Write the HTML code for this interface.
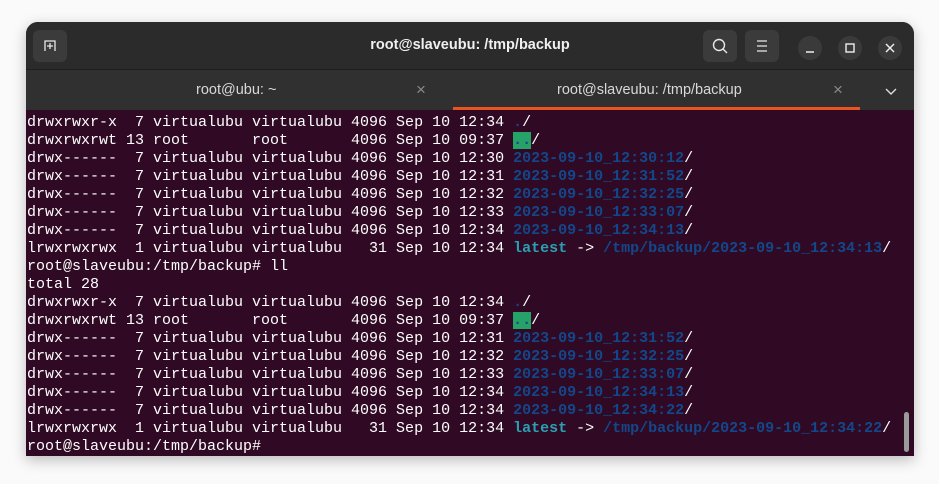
<!DOCTYPE html>
<html><head><meta charset="utf-8"><style>
*{margin:0;padding:0;box-sizing:border-box}
body{width:939px;height:484px;background:#fafafa;position:relative;overflow:hidden;font-family:"Liberation Sans",sans-serif}
.win{position:absolute;left:26px;top:22px;width:888px;height:434px;border-radius:12px 12px 0 0;overflow:hidden;background:#300a24;box-shadow:0 4px 14px rgba(0,0,0,.25)}
.hdr{position:absolute;left:0;top:0;width:888px;height:48px;background:#2b2b2b;border-bottom:1px solid #1e1e1e}
.btn{position:absolute;top:8px;width:34px;height:32px;border-radius:6px;background:#3b3b3b}
.circ{position:absolute;top:14px;width:24px;height:24px;border-radius:50%;background:#3a3a3a}
.title{position:absolute;left:0;right:0;top:15px;text-align:center;color:#f0f0f0;font-weight:bold;font-size:14.5px}
.tabs{position:absolute;left:0;top:48px;width:888px;height:40px;background:#303030}
.tab{position:absolute;top:12px;color:#d8d8d8;font-size:14.5px}
.x{position:absolute;top:10px;color:#8a8a8a;font-size:17px}
.ul{position:absolute;left:427px;top:85px;width:407px;height:3px;background:#e95420}
pre{position:absolute;left:1px;top:92px;font-family:"Liberation Mono",monospace;font-size:15px;line-height:18px;color:#fff}
.b{color:#12488b;font-weight:bold}.c{color:#2aa1b3;font-weight:bold}.g{background:#26a269;color:#12488b;font-weight:bold}
.sb{position:absolute;left:878px;top:390px;width:5px;height:40px;border-radius:3px;background:#9a9a9a}
</style></head><body>
<div class="win">
 <div class="hdr">
  <div class="btn" style="left:7px"><svg width="34" height="32"><path d="M12 21V11h10v10M17 13v6M14 16h6" stroke="#e8e8e8" stroke-width="1.3" fill="none"/></svg></div>
  <div class="title">root@slaveubu: /tmp/backup</div>
  <div class="btn" style="left:677px"><svg width="34" height="32"><circle cx="16" cy="15" r="5.5" stroke="#e8e8e8" stroke-width="1.4" fill="none"/><path d="M20 19l4 4" stroke="#e8e8e8" stroke-width="1.4"/></svg></div>
  <div class="btn" style="left:719px"><svg width="34" height="32"><path d="M12 11h10M12 16h10M12 21h10" stroke="#e8e8e8" stroke-width="1.3"/></svg></div>
  <div class="circ" style="left:772px"><svg width="24" height="24"><path d="M8 16h8" stroke="#eee" stroke-width="1.4"/></svg></div>
  <div class="circ" style="left:812px"><svg width="24" height="24"><rect x="8" y="8" width="8" height="8" stroke="#eee" stroke-width="1.4" fill="none"/></svg></div>
  <div class="circ" style="left:852px"><svg width="24" height="24"><path d="M8 8l8 8M16 8l-8 8" stroke="#eee" stroke-width="1.5"/></svg></div>
 </div>
 <div class="tabs">
  <div class="tab" style="left:170px">root@ubu: ~</div>
  <div class="x" style="left:390px">×</div>
  <div class="tab" style="left:531px">root@slaveubu: /tmp/backup</div>
  <div class="x" style="left:807px">×</div>
  <svg style="position:absolute;left:858px;top:15px" width="14" height="12"><path d="M2 4l5 5 5-5" stroke="#ddd" stroke-width="1.4" fill="none"/></svg>
 </div>
 <div class="ul"></div>
<pre>drwxrwxr-x  7 virtualubu virtualubu 4096 Sep 10 12:34 <span class="b">.</span>/
drwxrwxrwt 13 root       root       4096 Sep 10 09:37 <span class="g">..</span>/
drwx------  7 virtualubu virtualubu 4096 Sep 10 12:30 <span class="b">2023-09-10_12:30:12</span>/
drwx------  7 virtualubu virtualubu 4096 Sep 10 12:31 <span class="b">2023-09-10_12:31:52</span>/
drwx------  7 virtualubu virtualubu 4096 Sep 10 12:32 <span class="b">2023-09-10_12:32:25</span>/
drwx------  7 virtualubu virtualubu 4096 Sep 10 12:33 <span class="b">2023-09-10_12:33:07</span>/
drwx------  7 virtualubu virtualubu 4096 Sep 10 12:34 <span class="b">2023-09-10_12:34:13</span>/
lrwxrwxrwx  1 virtualubu virtualubu   31 Sep 10 12:34 <span class="c">latest</span> -&gt; <span class="b">/tmp/backup/2023-09-10_12:34:13</span>/
root@slaveubu:/tmp/backup# ll
total 28
drwxrwxr-x  7 virtualubu virtualubu 4096 Sep 10 12:34 <span class="b">.</span>/
drwxrwxrwt 13 root       root       4096 Sep 10 09:37 <span class="g">..</span>/
drwx------  7 virtualubu virtualubu 4096 Sep 10 12:31 <span class="b">2023-09-10_12:31:52</span>/
drwx------  7 virtualubu virtualubu 4096 Sep 10 12:32 <span class="b">2023-09-10_12:32:25</span>/
drwx------  7 virtualubu virtualubu 4096 Sep 10 12:33 <span class="b">2023-09-10_12:33:07</span>/
drwx------  7 virtualubu virtualubu 4096 Sep 10 12:34 <span class="b">2023-09-10_12:34:13</span>/
drwx------  7 virtualubu virtualubu 4096 Sep 10 12:34 <span class="b">2023-09-10_12:34:22</span>/
lrwxrwxrwx  1 virtualubu virtualubu   31 Sep 10 12:34 <span class="c">latest</span> -&gt; <span class="b">/tmp/backup/2023-09-10_12:34:22</span>/
root@slaveubu:/tmp/backup#</pre>
 <div class="sb"></div>
</div>
</body></html>
